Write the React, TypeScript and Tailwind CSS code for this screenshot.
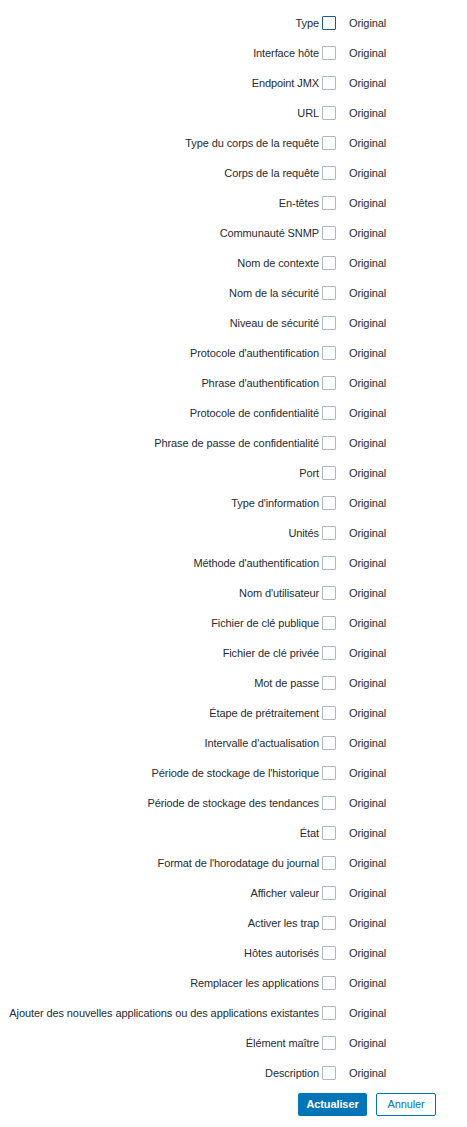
const rows = [
  'Type',
  'Interface hôte',
  'Endpoint JMX',
  'URL',
  'Type du corps de la requête',
  'Corps de la requête',
  'En-têtes',
  'Communauté SNMP',
  'Nom de contexte',
  'Nom de la sécurité',
  'Niveau de sécurité',
  "Protocole d'authentification",
  "Phrase d'authentification",
  'Protocole de confidentialité',
  'Phrase de passe de confidentialité',
  'Port',
  "Type d'information",
  'Unités',
  "Méthode d'authentification",
  "Nom d'utilisateur",
  'Fichier de clé publique',
  'Fichier de clé privée',
  'Mot de passe',
  'Étape de prétraitement',
  "Intervalle d'actualisation",
  "Période de stockage de l'historique",
  'Période de stockage des tendances',
  'État',
  "Format de l'horodatage du journal",
  'Afficher valeur',
  'Activer les trap',
  'Hôtes autorisés',
  'Remplacer les applications',
  'Ajouter des nouvelles applications ou des applications existantes',
  'Élément maître',
  'Description',
];

const App = () => {
  return (
    <div
      className="min-h-[1127px] w-[467px] bg-white pt-[8px] text-[11px] tracking-[-0.1px] text-[#1f2c33]"
      style={{ fontFamily: '"Liberation Sans", Arial, sans-serif' }}
    >
      {rows.map((label, i) => (
        <div key={label} className="flex h-[30px] items-center">
          <div className="w-[319px] shrink-0 text-right whitespace-nowrap">{label}</div>
          <span
            className={
              'ml-[3px] block h-[14px] w-[14px] shrink-0 rounded-[1px] border bg-white ' +
              (i === 0 ? 'border-[#1f5c8a]' : 'border-[#acbbc2]')
            }
          />
          <div className="ml-[13px]">Original</div>
        </div>
      ))}
      <div className="mt-[5px] flex gap-[9px] pl-[298px]">
        <button className="h-[23px] w-[69px] rounded-[2px] bg-[#0275b8] text-[11px] font-bold text-white">
          Actualiser
        </button>
        <button className="h-[23px] w-[60px] rounded-[2px] border border-[#0275b8] bg-white text-[11px] text-[#0275b8]">
          Annuler
        </button>
      </div>
    </div>
  );
};

export default App;
